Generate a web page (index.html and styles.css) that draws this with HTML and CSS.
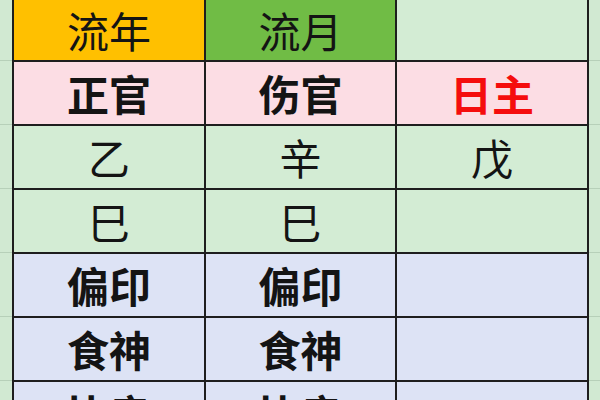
FILE: index.html
```html
<!DOCTYPE html>
<html lang="zh">
<head>
<meta charset="utf-8">
<link rel="stylesheet" href="styles.css">
</head>
<body>
<div class="sheet">
  <div class="cell head-year">流年</div>
  <div class="cell head-month">流月</div>
  <div class="cell green"></div>

  <div class="cell pink bold">正官</div>
  <div class="cell pink bold">伤官</div>
  <div class="cell pink bold red">日主</div>

  <div class="cell green">乙</div>
  <div class="cell green">辛</div>
  <div class="cell green">戊</div>

  <div class="cell green">巳</div>
  <div class="cell green">巳</div>
  <div class="cell green"></div>

  <div class="cell lav bold">偏印</div>
  <div class="cell lav bold">偏印</div>
  <div class="cell lav"></div>

  <div class="cell lav bold">食神</div>
  <div class="cell lav bold">食神</div>
  <div class="cell lav"></div>

  <div class="cell lav bold">比肩</div>
  <div class="cell lav bold">比肩</div>
  <div class="cell lav"></div>
</div>
</body>
</html>
```

FILE: styles.css
```css
html, body {
  margin: 0;
  padding: 0;
  height: 100%;
  overflow: hidden;
}

body {
  background: repeating-linear-gradient(
    180deg,
    #d1e9d2 0px,
    #d1e9d2 60px,
    #b7d0b9 60px,
    #b7d0b9 61px,
    #d1e9d2 61px,
    #d1e9d2 64px
  );
  font-family: "Noto Sans CJK SC", "Noto Sans", sans-serif;
  color: #141414;
}

.sheet {
  display: grid;
  grid-template-columns: 190px 189px 190px;
  grid-template-rows: 60px repeat(6, 62px);
  gap: 2px;
  padding: 0 2px 2px 2px;
  width: max-content;
  margin: 0 0 0 12px;
  background: #1e1e1e;
}

.cell {
  display: flex;
  align-items: center;
  justify-content: center;
  font-size: 42px;
  line-height: 1;
  font-weight: 400;
}

.bold {
  font-weight: 700;
}

.head-year {
  background: #ffc000;
}

.head-month {
  background: #70bc45;
}

.green {
  background: #d3ecd4;
}

.pink {
  background: #fcdde4;
}

.lav {
  background: #dde3f5;
}

.red {
  color: #f50d0d;
}
```
